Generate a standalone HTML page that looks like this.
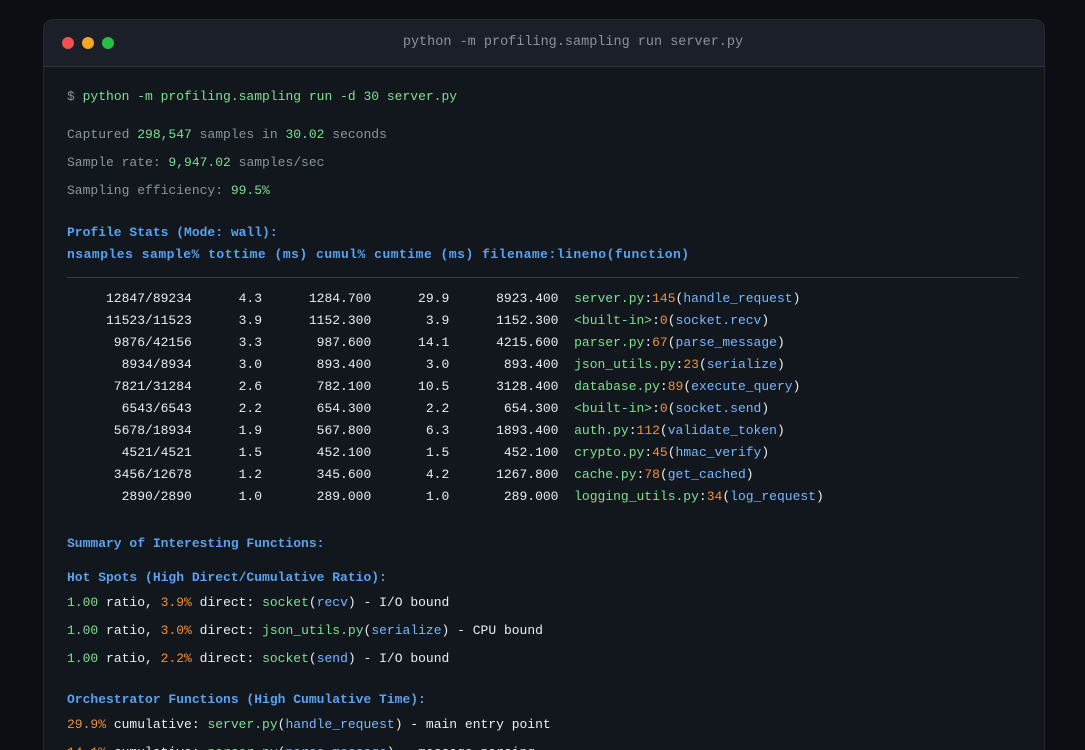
<!DOCTYPE html>
<html style="width:1085px;height:750px;overflow:hidden"><head><style>
body{margin:0;width:1085px;height:750px;background:#0b0e13;overflow:hidden;font-family:"Liberation Mono",monospace;font-size:13px;position:relative;}
.win{position:absolute;left:43px;top:19px;width:1000px;height:740px;background:#12161d;border:1px solid #262b33;border-radius:10px;overflow:hidden;}
.tb{height:46px;background:#1b1f27;border-bottom:1px solid #30353e;position:relative;}
.dot{position:absolute;top:17px;width:12px;height:12px;border-radius:50%;}
.title{position:absolute;left:58px;right:0;top:15px;text-align:center;color:#8b929c;font-size:13.5px;}
.l{position:absolute;left:23px;white-space:pre;line-height:16px;color:#e6edf3;}
.g{color:#7ee08f}.o{color:#f0913e}.b{color:#79b8ff}.d{color:#8b949e}.h{color:#5aa2f0;font-weight:bold}.w{color:#e6edf3}
.hr{position:absolute;left:23px;width:952px;top:257px;height:1px;background:#353b45;}
</style></head><body>
<div class="win">
<div class="tb">
<div class="dot" style="left:18px;background:#f0524f"></div>
<div class="dot" style="left:38px;background:#f5a623"></div>
<div class="dot" style="left:58px;background:#28c043"></div>
<div class="title">python -m profiling.sampling run server.py</div>
</div>
<div class="l" style="top:69px"><span class="d">$ </span><span class="g">python -m profiling.sampling run -d 30 server.py</span></div>
<div class="l d" style="top:107px">Captured <span class="g">298,547</span> samples in <span class="g">30.02</span> seconds</div>
<div class="l d" style="top:135px">Sample rate: <span class="g">9,947.02</span> samples/sec</div>
<div class="l d" style="top:163px">Sampling efficiency: <span class="g">99.5%</span></div>
<div class="l h" style="top:205px">Profile Stats (Mode: wall):</div>
<div class="l h" style="top:227px;letter-spacing:0.5px">nsamples sample% tottime (ms) cumul% cumtime (ms) filename:lineno(function)</div>
<div class="hr"></div>
<div class="l" style="top:268px;line-height:22px">     12847/89234      4.3      1284.700      29.9      8923.400  <span class="g">server.py</span>:<span class="o">145</span>(<span class="b">handle_request</span>)
     11523/11523      3.9      1152.300       3.9      1152.300  <span class="g">&lt;built-in&gt;</span>:<span class="o">0</span>(<span class="b">socket.recv</span>)
      9876/42156      3.3       987.600      14.1      4215.600  <span class="g">parser.py</span>:<span class="o">67</span>(<span class="b">parse_message</span>)
       8934/8934      3.0       893.400       3.0       893.400  <span class="g">json_utils.py</span>:<span class="o">23</span>(<span class="b">serialize</span>)
      7821/31284      2.6       782.100      10.5      3128.400  <span class="g">database.py</span>:<span class="o">89</span>(<span class="b">execute_query</span>)
       6543/6543      2.2       654.300       2.2       654.300  <span class="g">&lt;built-in&gt;</span>:<span class="o">0</span>(<span class="b">socket.send</span>)
      5678/18934      1.9       567.800       6.3      1893.400  <span class="g">auth.py</span>:<span class="o">112</span>(<span class="b">validate_token</span>)
       4521/4521      1.5       452.100       1.5       452.100  <span class="g">crypto.py</span>:<span class="o">45</span>(<span class="b">hmac_verify</span>)
      3456/12678      1.2       345.600       4.2      1267.800  <span class="g">cache.py</span>:<span class="o">78</span>(<span class="b">get_cached</span>)
       2890/2890      1.0       289.000       1.0       289.000  <span class="g">logging_utils.py</span>:<span class="o">34</span>(<span class="b">log_request</span>)</div>
<div class="l h" style="top:516px">Summary of Interesting Functions:</div>
<div class="l h" style="top:550px">Hot Spots (High Direct/Cumulative Ratio):</div>
<div class="l" style="top:575px"><span class="g">1.00</span> ratio, <span class="o">3.9%</span> direct: <span class="g">socket</span>(<span class="b">recv</span>) - I/O bound</div>
<div class="l" style="top:603px"><span class="g">1.00</span> ratio, <span class="o">3.0%</span> direct: <span class="g">json_utils.py</span>(<span class="b">serialize</span>) - CPU bound</div>
<div class="l" style="top:631px"><span class="g">1.00</span> ratio, <span class="o">2.2%</span> direct: <span class="g">socket</span>(<span class="b">send</span>) - I/O bound</div>
<div class="l h" style="top:672px">Orchestrator Functions (High Cumulative Time):</div>
<div class="l" style="top:697px"><span class="o">29.9%</span> cumulative: <span class="g">server.py</span>(<span class="b">handle_request</span>) - main entry point</div>
<div class="l" style="top:725px"><span class="o">14.1%</span> cumulative: <span class="g">parser.py</span>(<span class="b">parse_message</span>) - message parsing</div>
</div>
</body></html>
